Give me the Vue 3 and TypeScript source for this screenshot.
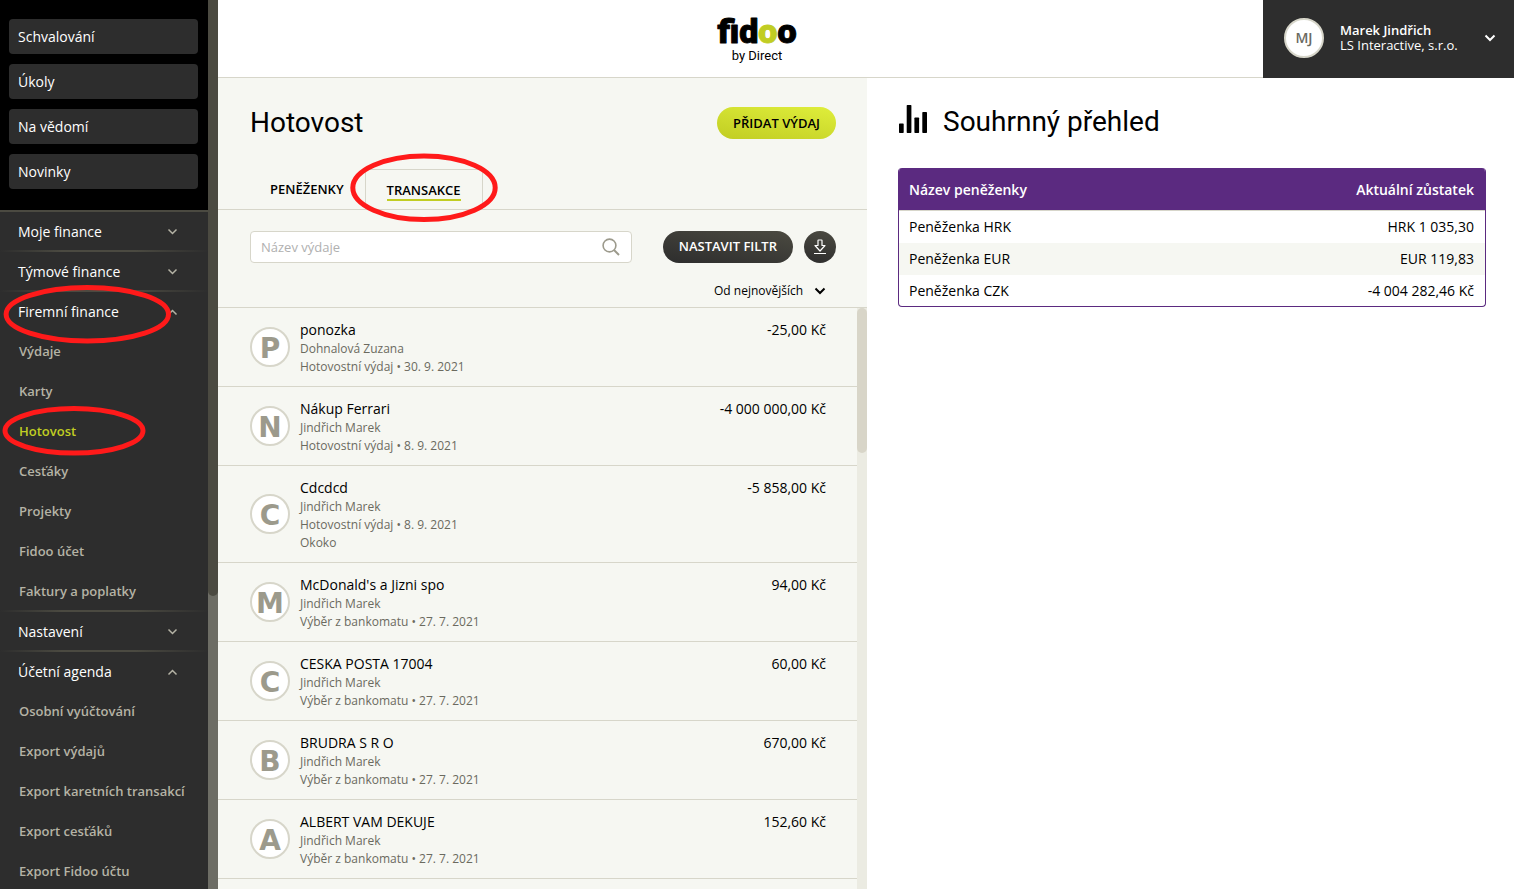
<script setup lang="ts">
import { ref } from 'vue'

interface Section {
  label: string
  open: boolean
  items: string[]
}

interface Transaction {
  name: string
  person: string
  detail: string
  note?: string
  amount: string
}

interface Wallet {
  name: string
  balance: string
}

const shortcuts: string[] = ['Schvalování', 'Úkoly', 'Na vědomí', 'Novinky']

const activeItem = ref('Hotovost')
const search = ref('')

const sections = ref<Section[]>([
  { label: 'Moje finance', open: false, items: [] },
  { label: 'Týmové finance', open: false, items: [] },
  {
    label: 'Firemní finance',
    open: true,
    items: ['Výdaje', 'Karty', 'Hotovost', 'Cesťáky', 'Projekty', 'Fidoo účet', 'Faktury a poplatky'],
  },
  { label: 'Nastavení', open: false, items: [] },
  {
    label: 'Účetní agenda',
    open: true,
    items: ['Osobní vyúčtování', 'Export výdajů', 'Export karetních transakcí', 'Export cesťáků', 'Export Fidoo účtu'],
  },
])

const transactions: Transaction[] = [
  { name: 'ponozka', person: 'Dohnalová Zuzana', detail: 'Hotovostní výdaj • 30. 9. 2021', amount: '-25,00 Kč' },
  { name: 'Nákup Ferrari', person: 'Jindřich Marek', detail: 'Hotovostní výdaj • 8. 9. 2021', amount: '-4 000 000,00 Kč' },
  { name: 'Cdcdcd', person: 'Jindřich Marek', detail: 'Hotovostní výdaj • 8. 9. 2021', note: 'Okoko', amount: '-5 858,00 Kč' },
  { name: "McDonald's a Jizni spo", person: 'Jindřich Marek', detail: 'Výběr z bankomatu • 27. 7. 2021', amount: '94,00 Kč' },
  { name: 'CESKA POSTA 17004', person: 'Jindřich Marek', detail: 'Výběr z bankomatu • 27. 7. 2021', amount: '60,00 Kč' },
  { name: 'BRUDRA S R O', person: 'Jindřich Marek', detail: 'Výběr z bankomatu • 27. 7. 2021', amount: '670,00 Kč' },
  { name: 'ALBERT VAM DEKUJE', person: 'Jindřich Marek', detail: 'Výběr z bankomatu • 27. 7. 2021', amount: '152,60 Kč' },
]

const wallets: Wallet[] = [
  { name: 'Peněženka HRK', balance: 'HRK 1 035,30' },
  { name: 'Peněženka EUR', balance: 'EUR 119,83' },
  { name: 'Peněženka CZK', balance: '-4 004 282,46 Kč' },
]
</script>

<template>
  <div class="app">
    <aside class="sidebar">
      <div class="sidebar-body">
        <div class="shortcuts">
          <button v-for="s in shortcuts" :key="s" type="button" class="shortcut">{{ s }}</button>
        </div>
        <nav>
          <div v-for="section in sections" :key="section.label" class="section">
            <button type="button" class="section-head" :aria-expanded="section.open" @click="section.open = !section.open">
              <span>{{ section.label }}</span>
              <svg class="chevron" :class="{ up: section.open }" width="11" height="8" viewBox="0 0 11 8" aria-hidden="true">
                <path d="M1.5 1.5 5.5 5.5 9.5 1.5" fill="none" stroke="currentColor" stroke-width="1.5" />
              </svg>
            </button>
            <template v-if="section.open">
              <a
                v-for="item in section.items"
                :key="item"
                href="#"
                class="sub"
                :class="{ active: item === activeItem }"
                @click.prevent="activeItem = item"
              >{{ item }}</a>
            </template>
          </div>
        </nav>
      </div>
      <div class="sidebar-track"><div class="sidebar-thumb"></div></div>
    </aside>

    <div class="page">
      <header class="topbar">
        <div class="brand">
          <svg width="100" height="64" viewBox="0 0 100 64" role="img" aria-label="fidoo by Direct">
            <text class="wordmark" x="50" y="36" text-anchor="middle">fid<tspan class="lime">o</tspan>o</text>
            <text class="tagline" x="50" y="53" text-anchor="middle">by Direct</text>
          </svg>
        </div>
        <button type="button" class="user">
          <span class="user-avatar">MJ</span>
          <span class="user-text">
            <span class="user-name">Marek Jindřich</span>
            <span class="user-company">LS Interactive, s.r.o.</span>
          </span>
          <svg width="12" height="8" viewBox="0 0 12 8" aria-hidden="true">
            <path d="M1.5 1.5 6 6 10.5 1.5" fill="none" stroke="#fff" stroke-width="2" />
          </svg>
        </button>
      </header>

      <div class="columns">
        <main class="list-panel">
          <div class="title-row">
            <h1>Hotovost</h1>
            <button type="button" class="pill lime-pill">PŘIDAT VÝDAJ</button>
          </div>
          <div class="tabs" role="tablist">
            <button type="button" role="tab" class="tab" aria-selected="false">PENĚŽENKY</button>
            <button type="button" role="tab" class="tab current" aria-selected="true"><span>TRANSAKCE</span></button>
          </div>
          <div class="filters">
            <label class="search">
              <input v-model="search" type="text" placeholder="Název výdaje" aria-label="Název výdaje" />
              <svg width="18" height="18" viewBox="0 0 18 18" aria-hidden="true">
                <circle cx="7.5" cy="7.5" r="6.4" fill="none" stroke="#9c9a8c" stroke-width="1.6" />
                <path d="M12 12 17 17" stroke="#9c9a8c" stroke-width="2" />
              </svg>
            </label>
            <button type="button" class="pill dark-pill">NASTAVIT FILTR</button>
            <button type="button" class="round" aria-label="Stáhnout">
              <svg width="14" height="16" viewBox="0 0 14 16" aria-hidden="true">
                <path
                  d="M5 1.5Q5 1 5.5 1H8.5Q9 1 9 1.5V6.500H12L7 12 2 6.500H5ZM1 14.500H13"
                  fill="none"
                  stroke="#fff"
                  stroke-width="1.2"
                  stroke-linejoin="round"
                />
              </svg>
            </button>
          </div>
          <div class="sort">
            <select aria-label="Řazení">
              <option>Od nejnovějších</option>
            </select>
            <svg width="12" height="8" viewBox="0 0 12 8" aria-hidden="true">
              <path d="M1.5 1.5 6 6 10.5 1.5" fill="none" stroke="#000" stroke-width="2" />
            </svg>
          </div>
          <div class="list-area">
            <ul class="list">
              <li v-for="t in transactions" :key="t.name" class="row">
                <span class="avatar">{{ t.name[0].toUpperCase() }}</span>
                <div class="info">
                  <p class="name">{{ t.name }}</p>
                  <p class="meta">{{ t.person }}</p>
                  <p class="meta">{{ t.detail }}</p>
                  <p v-if="t.note" class="meta">{{ t.note }}</p>
                </div>
                <span class="amount">{{ t.amount }}</span>
              </li>
            </ul>
            <div class="list-track"><div class="list-thumb"></div></div>
          </div>
        </main>

        <section class="summary">
          <div class="summary-head">
            <svg width="30" height="28" viewBox="0 0 30 28" aria-hidden="true">
              <rect x="1" y="18.400" width="4.700" height="9.600" rx=".7" />
              <rect x="8.700" y="0" width="4.700" height="28" rx=".7" />
              <rect x="16.400" y="12.600" width="4.700" height="15.400" rx=".7" />
              <rect x="24.300" y="7" width="4.700" height="21" rx=".7" />
            </svg>
            <h2>Souhrnný přehled</h2>
          </div>
          <div class="wallets">
            <table>
              <thead>
                <tr>
                  <th scope="col">Název peněženky</th>
                  <th scope="col">Aktuální zůstatek</th>
                </tr>
              </thead>
              <tbody>
                <tr v-for="w in wallets" :key="w.name">
                  <td>{{ w.name }}</td>
                  <td>{{ w.balance }}</td>
                </tr>
              </tbody>
            </table>
          </div>
        </section>
      </div>
    </div>

    <svg class="marks" width="520" height="480" viewBox="0 0 520 480" aria-hidden="true">
      <ellipse cx="87.3" cy="314.3" rx="81.2" ry="26.700" />
      <ellipse cx="74" cy="430.800" rx="69" ry="22.300" />
      <ellipse cx="424" cy="187.700" rx="71.200" ry="31.800" />
    </svg>
  </div>
</template>

<style>
body {
  margin: 0;
  background: #fff;
}
</style>

<style scoped>
.app {
  position: relative;
  display: flex;
  height: 100vh;
  overflow: hidden;
  font-family: 'Open Sans', 'Noto Sans', sans-serif;
  font-size: 14px;
  line-height: 20px;
  color: #000;
}
button,
input,
select {
  font: inherit;
  color: inherit;
  border: 0;
  padding: 0;
  margin: 0;
  background: none;
}
button {
  cursor: pointer;
}
.sidebar {
  flex: none;
  width: 218px;
  display: flex;
  background: #2d2d2d;
  color: #fff;
}
.sidebar-body {
  flex: 1;
  overflow: hidden;
}
.shortcuts {
  display: flex;
  flex-direction: column;
  gap: 10px;
  padding: 19px 10px 21px 9px;
  background: #000;
}
.shortcut {
  height: 35px;
  padding: 0 9px;
  border-radius: 4px;
  background: #2d2d2d;
  text-align: left;
}
.section {
  border-top: 2px solid;
  border-image: linear-gradient(90deg, #2d2d2d, #4b4a41 30%, #4b4a41 65%, #2d2d2d) 1;
}
.section:first-child {
  border-image: none;
  border-color: #4b4a41;
}
.section-head {
  display: flex;
  align-items: center;
  justify-content: space-between;
  width: 100%;
  height: 38px;
  padding: 2px 30px 0 18px;
}
.chevron {
  color: #b5b3a5;
}
.chevron.up {
  transform: rotate(180deg);
}
.sub {
  display: block;
  padding: 2px 19px 0;
  font-size: 13px;
  line-height: 38px;
  font-weight: 600;
  color: #b5b3a5;
  text-decoration: none;
  white-space: nowrap;
}
.sub.active {
  color: #c1cd23;
}
.sidebar-track {
  width: 10px;
  background: #6d6d65;
}
.sidebar-thumb {
  height: 67%;
  border-radius: 0 0 5px 5px;
  background: #4b4a41;
}
.page {
  flex: 1;
  min-width: 0;
  display: flex;
  flex-direction: column;
}
.topbar {
  flex: none;
  display: flex;
  justify-content: flex-end;
  height: 78px;
  box-sizing: border-box;
  box-shadow: inset 0 -1px #d7d6ca;
}
.brand {
  flex: 1;
  display: flex;
  justify-content: center;
  padding: 7px 0 0 33px;
}
.wordmark {
  font: 900 34px Roboto, 'Liberation Sans', sans-serif;
  stroke: #000;
  stroke-width: 1px;
  stroke-linejoin: round;
}
.wordmark .lime {
  fill: #c1cd23;
  stroke: #c1cd23;
}
.tagline {
  font: 13px Roboto, 'Liberation Sans', sans-serif;
}
.user {
  display: flex;
  align-items: center;
  width: 251px;
  padding: 0 18px 2px 21px;
  background: #2d2d2d;
  color: #fff;
  text-align: left;
}
.user-avatar {
  display: flex;
  align-items: center;
  justify-content: center;
  width: 36px;
  height: 36px;
  border: 2px solid #d7d6ca;
  border-radius: 50%;
  background: #fff;
  color: #6b6a5f;
  font-weight: 600;
}
.user-text {
  flex: 1;
  display: flex;
  flex-direction: column;
  margin-left: 16px;
  font-size: 13px;
  line-height: 15px;
}
.user-name {
  font-weight: 600;
}
.columns {
  flex: 1;
  min-height: 0;
  display: grid;
  grid-template-columns: 649fr 647fr;
}
.list-panel {
  display: flex;
  flex-direction: column;
  min-height: 0;
  background: #f6f7f2;
}
.title-row {
  display: flex;
  justify-content: space-between;
  align-items: center;
  height: 89px;
  padding: 0 31px 2px 32px;
}
h1,
h2 {
  margin: 0;
  font: 28px/32px Roboto, 'Liberation Sans', sans-serif;
}
.pill {
  height: 32px;
  border-radius: 16px;
  padding: 0 16px;
  font-size: 13px;
  font-weight: 600;
  white-space: nowrap;
}
.lime-pill {
  background: linear-gradient(10deg, #c1cd23, #dfee3b);
}
.dark-pill {
  margin-left: 31px;
  padding-bottom: 2px;
  background: linear-gradient(10deg, #2d2d2d, #4b4a41);
  color: #fff;
}
.tabs {
  display: flex;
  height: 40px;
  padding-left: 32px;
  border-bottom: 1px solid #d7d6ca;
}
.tab {
  padding: 0 21px 0 20px;
  font-size: 13px;
  font-weight: 600;
}
.tab.current {
  padding: 2px 21px 0;
  border: 1px solid #d7d6ca;
  border-bottom: 0;
  border-radius: 4px 4px 0 0;
}
.tab.current span {
  display: inline-block;
  line-height: 17px;
  border-bottom: 2px solid #c1cd23;
}
.filters {
  display: flex;
  align-items: center;
  padding: 21px 31px 0 32px;
}
.search {
  flex: 1;
  display: flex;
  align-items: center;
  height: 30px;
  padding: 0 11px 0 10px;
  border: 1px solid #d7d6ca;
  border-radius: 4px;
  background: #fff;
}
.search input {
  flex: 1;
  min-width: 0;
  font-size: 13px;
  outline: 0;
}
.search input::placeholder {
  color: #b0b0b0;
  opacity: 1;
}
.round {
  display: flex;
  align-items: center;
  justify-content: center;
  width: 32px;
  height: 32px;
  margin-left: 11px;
  border-radius: 50%;
  background: linear-gradient(10deg, #2d2d2d, #4b4a41);
}
.sort {
  display: flex;
  justify-content: flex-end;
  align-items: center;
  gap: 10px;
  height: 33px;
  padding: 11px 41px 0 0;
  border-bottom: 1px solid #d7d6ca;
}
.sort select {
  appearance: none;
  font-size: 12px;
}
.list-area {
  flex: 1;
  min-height: 0;
  display: flex;
}
.list {
  flex: 1;
  margin: 0;
  padding: 0;
  list-style: none;
  overflow: hidden;
}
.row {
  display: flex;
  padding: 10px 31px 10px 32px;
  border-bottom: 1px solid #d7d6ca;
}
.avatar {
  align-self: center;
  box-sizing: border-box;
  width: 40px;
  height: 40px;
  padding-top: 2px;
  border: 2px solid #d7d6ca;
  border-radius: 50%;
  background: #fff;
  color: #9c9a8c;
  font: bold 28px/36px 'DejaVu Sans', sans-serif;
  text-align: center;
}
.info {
  flex: 1;
  margin-left: 10px;
  padding-top: 2px;
}
.amount {
  padding-top: 2px;
}
.info p {
  margin: 0;
}
.info .meta {
  font-size: 12px;
  line-height: 18px;
  color: #6b6a5f;
}
.list-track {
  width: 10px;
  background: #ebebe2;
}
.list-thumb {
  height: 25%;
  border-radius: 5px;
  background: #d8d5c8;
}
.summary {
  padding: 27px 28px 0 31px;
}
.summary-head {
  display: flex;
  align-items: center;
  gap: 15px;
  height: 28px;
}
.summary-head h2 {
  padding-top: 6px;
}
.wallets {
  margin-top: 35px;
  border: 1px solid #5b2a80;
  border-top: 0;
  border-radius: 4px;
  overflow: hidden;
}
table {
  width: 100%;
  border-collapse: separate;
  border-spacing: 0;
}
th {
  height: 40px;
  padding: 2px 10px 0;
  background: #5b2a80;
  border-bottom: 1px solid #d7d6ca;
  color: #fff;
  font-weight: 600;
  text-align: left;
}
td {
  height: 32px;
  padding: 0 10px;
}
tr:last-child td {
  height: 31px;
}
tbody tr:nth-child(even) {
  background: #f6f7f2;
}
th:last-child,
td:last-child {
  padding-right: 11px;
  text-align: right;
}
.marks {
  position: absolute;
  top: 0;
  left: 0;
  pointer-events: none;
}
.marks ellipse {
  fill: none;
  stroke: #ff1a1a;
  stroke-width: 5;
}
</style>
